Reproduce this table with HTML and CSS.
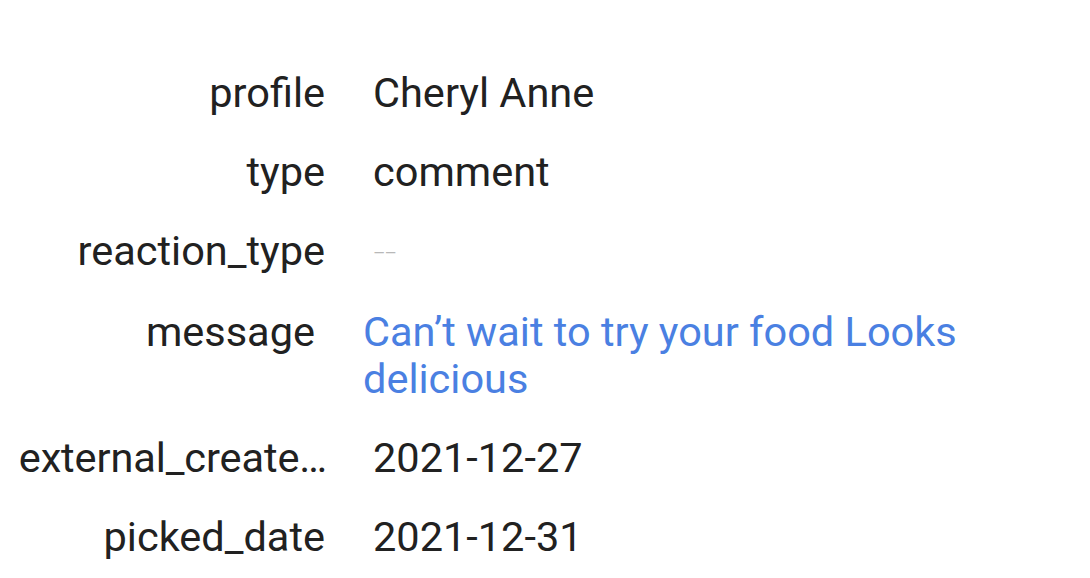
FILE: index.html
```html
<!DOCTYPE html>
<html>
<head>
<meta charset="utf-8">
<link rel="stylesheet" href="styles.css">
</head>
<body>
<div class="details">
  <div class="row">
    <div class="label">profile</div>
    <div class="value">Cheryl Anne</div>
  </div>
  <div class="row">
    <div class="label">type</div>
    <div class="value">comment</div>
  </div>
  <div class="row">
    <div class="label">reaction_type</div>
    <div class="value"><span class="empty">––</span></div>
  </div>
  <div class="row row-shift">
    <div class="label">message</div>
    <div class="value link">Can’t wait to try your food Looks delicious</div>
  </div>
  <div class="row">
    <div class="label label-long" title="external_created_at">external_create…</div>
    <div class="value">2021-12-27</div>
  </div>
  <div class="row">
    <div class="label">picked_date</div>
    <div class="value">2021-12-31</div>
  </div>
</div>
</body>
</html>
```

FILE: styles.css
```css
html, body {
  margin: 0;
  padding: 0;
  background: #ffffff;
}
body {
  font-family: Roboto, "Noto Sans", sans-serif;
  color: #212121;
  font-size: 41.5px;
  line-height: 47px;
}
.details {
  display: flex;
  flex-direction: column;
  gap: 32px;
  padding: 69px 0 0 14px;
}
.row {
  display: grid;
  grid-template-columns: 311px 1fr;
  column-gap: 48px;
}
.row-shift {
  margin-left: -10px;
}
.label {
  text-align: right;
  white-space: nowrap;
}
.label-long {
  margin-right: -2px;
  letter-spacing: -0.1px;
}
.value {
  max-width: 640px;
}
.link {
  color: #4a80e2;
}
.empty {
  color: #b8b8b8;
  font-size: 19px;
  letter-spacing: -1px;
  vertical-align: 6px;
}
```
